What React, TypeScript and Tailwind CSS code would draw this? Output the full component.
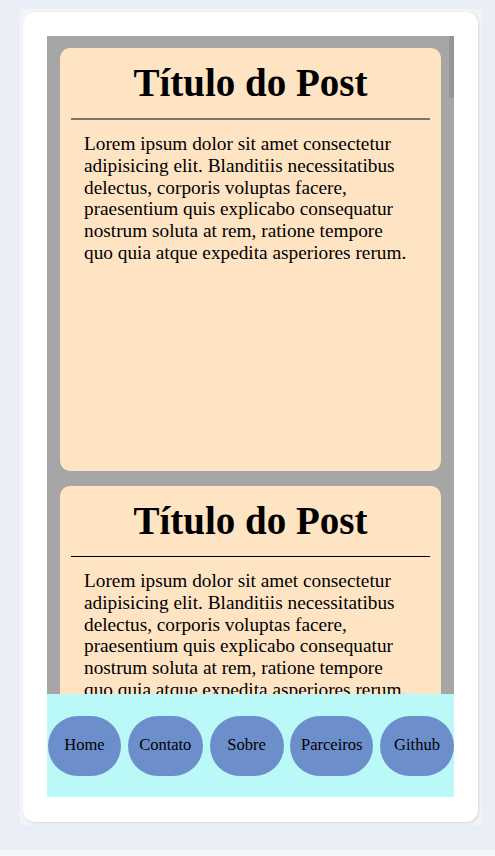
import React from "react";

const posts = Array.from({ length: 4 }, (_, i) => i);

const links = [
  { label: "Home", w: "w-[73px]" },
  { label: "Contato", w: "w-[75px]" },
  { label: "Sobre", w: "w-[74px]" },
  { label: "Parceiros", w: "w-[83px]" },
  { label: "Github", w: "w-[74px]" },
];

const Post: React.FC<{ first: boolean }> = ({ first }) => (
  <article className="h-[423px] w-[381px] shrink-0 rounded-[10px] bg-[#ffe4c4] px-[11px] pt-[12px]">
    <h1 className="text-center text-[39px] font-bold leading-[46px]">Título do Post</h1>
    {/* divider */}
    <hr
      className={
        first
          ? "mt-[12px] border-0 border-t-2 border-[#7d7468]"
          : "mt-[12px] border-0 border-t border-black"
      }
    />
    <p className="mt-[13px] pl-[13px] pr-[16px] text-[19.3px] leading-[21.8px]">
      Lorem ipsum dolor sit amet consectetur adipisicing elit. Blanditiis necessitatibus
      delectus, corporis voluptas facere, praesentium quis explicabo consequatur nostrum
      soluta at rem, ratione tempore quo quia atque expedita asperiores rerum.
    </p>
  </article>
);

export default function App() {
  return (
    <div className="h-[856px] w-[495px] bg-[#f5f6f8] font-['Liberation_Serif',serif] text-black">
      <div className="h-[850px] bg-[#eaeef7] pl-[20px] pt-[9px]">
        <div className="h-[816px] w-[462px] bg-[#f3f4f6] p-[3px]">
          <div className="h-[810px] w-[455px] rounded-[12px] bg-white p-[24px] shadow-[1px_1px_3px_rgba(0,0,0,0.12)]">
            {/* Phone frame */}
            <div className="flex h-[761px] w-[407px] flex-col bg-[#a6a6a6]">
              <div className="flex min-h-0 flex-1">
                <div className="min-w-0 flex-1 overflow-hidden">
                  <div className="flex flex-col gap-[15px] pl-[13px] pt-[12px]">
                    {posts.map((i) => (
                      <Post key={i} first={i === 0} />
                    ))}
                  </div>
                </div>
                {/* scrollbar */}
                <div className="w-[5px] shrink-0">
                  <div className="h-[62px] bg-[#969696]" />
                </div>
              </div>

              {/* Bottom nav */}
              <nav className="flex h-[103px] shrink-0 items-center justify-between bg-[#bbf9f9] pl-px">
                {links.map((l) => (
                  <a
                    key={l.label}
                    className={`${l.w} flex h-[60px] items-center justify-center rounded-[30px] bg-[#6c8fcb] text-[16.5px] text-black`}
                  >
                    {l.label}
                  </a>
                ))}
              </nav>
            </div>
          </div>
        </div>
      </div>
    </div>
  );
}
